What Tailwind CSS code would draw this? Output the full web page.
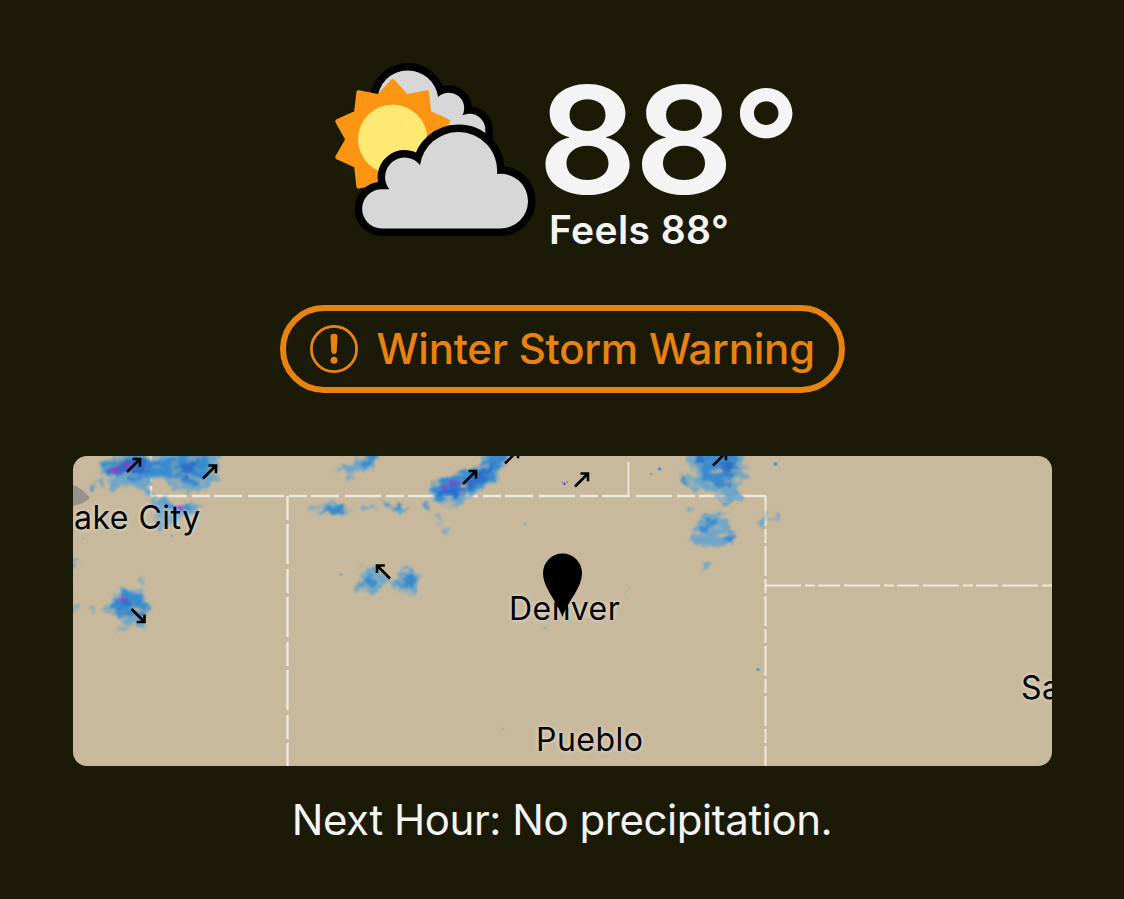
<!DOCTYPE html>
<html lang="en">
<head>
<meta charset="utf-8">
<title>Weather</title>
<script src="https://cdn.jsdelivr.net/npm/@tailwindcss/browser@4"></script>
</head>
<body class="h-[899px] overflow-hidden bg-[#1b1a06] font-['Inter',sans-serif] text-[#f4f4f5]">
<main class="flex h-full flex-col items-center pt-14">
  <!-- current conditions -->
  <header class="flex h-[186px] w-[472px] shrink-0 items-start">
    <svg class="h-[186px] w-[214px] shrink-0" viewBox="326 56 214 186" aria-label="Partly cloudy">
      <circle cx="363" cy="127" r="19"/>
      <path d="M377.4 100.8A30.3 30.3 0 0 1 407.700 70.500A30.300 30.300 0 0 1 438 97A15.5 15.5 0 0 1 462.5 115.3A16 16 0 0 1 485.3 131V150H377Z" fill="#d7d7d7" stroke="#000" stroke-width="15" paint-order="stroke"/>
      <g transform="translate(392.7 139.3)">
        <path d="M0-58 13.9-42.8 34.1-46.9 36.4-26.5 55.2-17.9 45 0 55.2 17.9 36.4 26.5 34.1 46.9 13.9 42.8 0 58-13.9 42.8-34.1 46.9-36.4 26.5-55.2 17.9-45 0-55.2-17.9-36.4-26.5-34.1-46.9-13.9-42.8Z" fill="#fb9512" stroke="#fb9512" stroke-width="4.5" stroke-linejoin="round"/>
        <circle r="34.7" fill="#ffe873"/>
      </g>
      <path d="M381.7 228.4A19.5 19.5 0 0 1 381.7 189.3H389.3A18.6 18.6 0 0 1 420 165A38.6 38.6 0 0 1 458.300 132A38.600 38.600 0 0 1 497 174A27.3 27.3 0 0 1 528 201.300A27.300 27.300 0 0 1 500.7 228.4Z" fill="#d7d7d7" stroke="#000" stroke-width="15" paint-order="stroke"/>
    </svg>
    <div class="flex flex-col pl-[2px] pt-[10px]">
      <div class="flex h-[140px] origin-left scale-x-[1.045] whitespace-nowrap text-[149px]/[149px] font-semibold tracking-[-3px]"><span class="-ml-[4px]">88</span><span class="translate-y-[2px] text-[147px]/[149px]">°</span></div>
      <div class="whitespace-nowrap pl-[7px] text-[39px]/[48px] font-semibold tracking-[0.4px]">Feels 88°</div>
    </div>
  </header>

  <!-- alert -->
  <div class="mt-[63px] flex h-[88px] w-[565px] shrink-0 items-center rounded-full border-6 border-[#e8830f] pl-6 text-[#e8830f]">
    <svg class="size-12 shrink-0" viewBox="0 0 48 48" fill="none">
      <circle cx="24" cy="24" r="22.6" stroke="currentColor" stroke-width="2.8"/>
      <path d="M20.5 11.4Q20.5 8.800 24 8.800T27.5 11.4L26.7 26.5Q26.5 29 24 29T21.3 26.5Z" fill="currentColor"/>
      <circle cx="24" cy="35.2" r="3.5" fill="currentColor"/>
    </svg>
    <span class="ml-[19px] whitespace-nowrap text-[42px]/[50px] font-medium tracking-[-0.25px]">Winter Storm Warning</span>
  </div>

  <!-- radar -->
  <div class="mt-[63px] h-[310px] w-[979px] shrink-0 overflow-hidden rounded-[14px] bg-[#c8b99c]">
    <svg class="size-full" viewBox="73 456 979 310">
      <defs>
        <filter id="rain" filterUnits="userSpaceOnUse" x="60" y="440" width="1010" height="340" color-interpolation-filters="sRGB">
          <feTurbulence type="fractalNoise" baseFrequency="0.13" numOctaves="3" seed="7" result="n"/>
          <feDisplacementMap in="SourceGraphic" in2="n" scale="14" xChannelSelector="R" yChannelSelector="G" result="d"/>
          <feTurbulence type="fractalNoise" baseFrequency="0.07 0.13" numOctaves="2" seed="12"/>
          <feColorMatrix values="0 0 0 0 0  0 0 0 0 0  0 0 0 0 0  3 0 0 0 -0.5" result="m"/>
          <feComposite in="d" in2="m" operator="in"/>
          <feGaussianBlur stdDeviation="1.1"/>
        </filter>
        <filter id="core" filterUnits="userSpaceOnUse" x="60" y="440" width="1010" height="340"><feGaussianBlur stdDeviation="0.8"/></filter>
        <g id="arrow" fill="none" stroke="#000" stroke-width="2.600"><path d="M-7 7 6-6M-1.500-6H6V1.800"/></g>
      </defs>
      <path d="M73 485Q82 488 90 498L83 503 73 506Z" fill="#96918a"/>
      <g fill="none" stroke="#efe8dc" stroke-width="2.4">
        <path d="M151 456V496" stroke-dasharray="12 3"/>
        <path d="M151 496H766" stroke-dasharray="36 5 18 4 28 6"/>
        <path d="M287.500 496V766" stroke-dasharray="24 4 40 5"/>
        <path d="M628.500 462V496" stroke-width="1.800"/>
        <path d="M765.500 496V766" stroke-width="2" stroke-dasharray="30 3 14 3"/>
        <path d="M765 585.500H1052" stroke-width="2" stroke-dasharray="36 4 10 3 22 4"/>
      </g>
      <g filter="url(#rain)">
        <g fill="#5fa3d0" stroke="#5fa3d0" stroke-width="1.500" opacity=".85">
          <path d="M102 462 130 450H218L216 478 204 490 180 490 160 480 148 480 153 498 142 492 132 486 112 490 108 480 122 478 104 474ZM98 482 104 480 104 485ZM152 500 166 498 172 506 200 504 196 512 180 518 170 522 160 532 156 520ZM105 610 122 588 140 590 150 612 142 622 118 631 124 618ZM70 560 78 562 76 566ZM70 596 77 604 73 614ZM90 606 95 608 92 613ZM139 578 144 582 142 584Z"/>
          <path d="M338 468 358 464 352 478ZM356 460 376 450 372 468 358 470ZM306 510 330 502 350 508 344 514ZM360 508 376 503 374 508ZM382 502 406 508 400 514ZM430 488 450 478 480 468 488 450H508L496 480 476 492 456 506 432 502ZM356 590 364 566 384 572 390 582 380 584 376 592ZM390 588 404 568 420 574 414 596 404 592Z"/>
          <path d="M680 480 690 474 690 450H742L746 476 736 486 742 500 722 504 712 490 684 488ZM688 538 708 512 722 516 736 536 714 550ZM758 524 764 516 764 528ZM768 518 780 514 778 520ZM686 510 694 508 690 512ZM702 564 708 565 704 571ZM438 514 440 522 442 517ZM444 526 448 534 444 532Z"/>
        </g>
        <g fill="#2f86d0" stroke="#2f86d0" stroke-width="1.500" opacity=".85">
          <path d="M102 464 130 458 164 462 186 452 208 452 208 474 196 484 176 480 160 474 146 476 128 478 116 474ZM89 485 95 486 92 491ZM108 608 124 590 140 598 148 612 132 618 118 614ZM166 504 188 506 178 514Z"/>
          <path d="M360 458 374 453 368 466ZM322 508 346 505 344 512 326 512ZM386 506 402 507 396 513ZM432 486 454 476 482 466 490 452H506L494 478 474 488 456 500 434 500ZM360 586 370 574 376 584ZM398 582 412 572 416 582 406 588ZM423 506 428 504 427 511Z"/>
          <path d="M682 474 688 484 682 484ZM694 452 732 452 740 472 728 486 706 482ZM700 532 712 516 718 526ZM720 538 734 532 732 542Z"/>
        </g>
      </g>
      <g filter="url(#rain)" fill="#2864cb" opacity=".7">
        <path d="M112 464 142 456 152 468 134 474 108 472ZM180 466 198 458 194 472 184 478ZM436 492 462 480 484 470 494 462 492 472 476 484 458 498ZM118 600 136 602 132 608ZM718 464 732 462 732 474 722 476ZM694 456 704 456 702 468Z"/>
      </g>
      <g fill="#a835c3" filter="url(#core)" opacity=".9">
        <path d="M109 469 117 468 122 470 120 472 114 473ZM124 464 130 462 131 466 125 467ZM442 486 446 484 447 489 444 491ZM450 480 454 481 453 485 449 486ZM456 481 460 481 458 486ZM119 599 124 597 126 600 121 602ZM176 507 181 506 184 510 179 511Z"/>
      </g>
      <g fill="#5250bb"><circle cx="564.500" cy="484" r="1.200"/><circle cx="567" cy="482" r=".8"/><circle cx="562.500" cy="482.500" r=".7"/></g>
      <g fill="#4d9acb">
        <circle cx="659.500" cy="469" r="1.800"/><circle cx="775.500" cy="464" r="2"/><circle cx="651" cy="474" r="1.300" opacity=".6"/><circle cx="758" cy="669.500" r="1.500"/><circle cx="341" cy="574.500" r="1.400" opacity=".6"/>
        <path d="M624 595 630 587" stroke="#a9b5aa" stroke-width="1.500"/><circle cx="525" cy="524" r="1.800" opacity=".3"/><circle cx="545" cy="628" r="1.800" opacity=".3"/><circle cx="503" cy="729" r="1.500" opacity=".3"/><circle cx="172" cy="536" r="1.500" opacity=".4"/><circle cx="83" cy="538" r="1.300" opacity=".3"/>
      </g>
      <use href="#arrow" x="134" y="465"/>
      <use href="#arrow" x="210" y="471.500"/>
      <use href="#arrow" x="470" y="477"/>
      <use href="#arrow" x="512" y="456.500"/>
      <use href="#arrow" x="582" y="479.500"/>
      <use href="#arrow" x="720" y="458.500"/>
      <use href="#arrow" transform="translate(383 571.500) rotate(-90)"/>
      <use href="#arrow" transform="translate(138.500 616) rotate(90)"/>
      <g class="font-['Inter',sans-serif] text-[32px] tracking-[0.5px] [text-shadow:0_0_4px_#ffffffb0]" fill="#000">
        <text x="74" y="528.500">ake City</text>
        <text x="509" y="620">Denver</text>
        <text x="536" y="750.500">Pueblo</text>
        <text x="1021" y="699">Sa</text>
      </g>
      <path d="M562.500 617C557 601 543 588 543 573A19.500 19.500 0 0 1 582 573C582 588 568 601 562.500 617Z"/>
    </svg>
  </div>

  <p class="mt-[29px] whitespace-nowrap text-[42px]/[50px] tracking-[-0.45px]">Next Hour: No precipitation.</p>
</main>
</body>
</html>
